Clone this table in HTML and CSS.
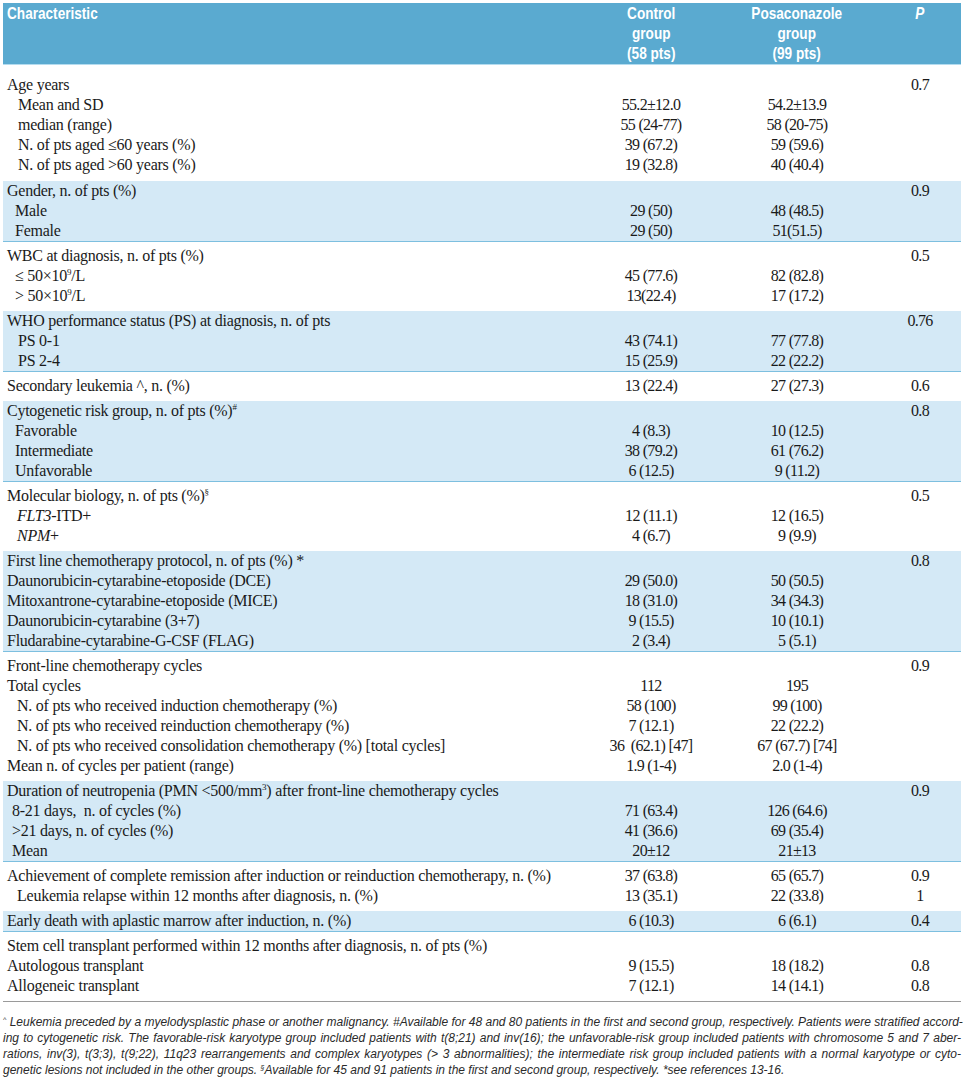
FILE: index.html
```html
<!DOCTYPE html>
<html lang="en">
<head>
<meta charset="utf-8">
<title>Patient characteristics</title>
<link rel="stylesheet" href="styles.css">
</head>
<body>
<div class="page">
  <div class="thead">
    <div class="h-label"><span class="hx left">Characteristic</span></div>
    <div class="h-num"><span class="hx">Control<br>group<br>(58 pts)</span></div>
    <div class="h-num"><span class="hx">Posaconazole<br>group<br>(99 pts)</span></div>
    <div class="h-p"><span class="hx"><i>P</i></span></div>
  </div>

  <div class="group first">
    <div class="row"><div class="lab">Age years</div><div class="v"></div><div class="v"></div><div class="p">0.7</div></div>
    <div class="row"><div class="lab in11">Mean and SD</div><div class="v">55.2±12.0</div><div class="v">54.2±13.9</div><div class="p"></div></div>
    <div class="row"><div class="lab in11">median (range)</div><div class="v">55 (24-77)</div><div class="v">58 (20-75)</div><div class="p"></div></div>
    <div class="row"><div class="lab in11">N. of pts aged ≤60 years (%)</div><div class="v">39 (67.2)</div><div class="v">59 (59.6)</div><div class="p"></div></div>
    <div class="row"><div class="lab in11">N. of pts aged &gt;60 years (%)</div><div class="v">19 (32.8)</div><div class="v">40 (40.4)</div><div class="p"></div></div>
  </div>

  <div class="group band">
    <div class="row"><div class="lab">Gender, n. of pts (%)</div><div class="v"></div><div class="v"></div><div class="p">0.9</div></div>
    <div class="row"><div class="lab in8">Male</div><div class="v">29 (50)</div><div class="v">48 (48.5)</div><div class="p"></div></div>
    <div class="row"><div class="lab in8">Female</div><div class="v">29 (50)</div><div class="v">51(51.5)</div><div class="p"></div></div>
  </div>

  <div class="group">
    <div class="row"><div class="lab">WBC at diagnosis, n. of pts (%)</div><div class="v"></div><div class="v"></div><div class="p">0.5</div></div>
    <div class="row"><div class="lab in8">≤ 50×10<sup>9</sup>/L</div><div class="v">45 (77.6)</div><div class="v">82 (82.8)</div><div class="p"></div></div>
    <div class="row"><div class="lab in8">&gt; 50×10<sup>9</sup>/L</div><div class="v">13(22.4)</div><div class="v">17 (17.2)</div><div class="p"></div></div>
  </div>

  <div class="group band">
    <div class="row"><div class="lab">WHO performance status (PS) at diagnosis, n. of pts</div><div class="v"></div><div class="v"></div><div class="p">0.76</div></div>
    <div class="row"><div class="lab in11">PS 0-1</div><div class="v">43 (74.1)</div><div class="v">77 (77.8)</div><div class="p"></div></div>
    <div class="row"><div class="lab in11">PS 2-4</div><div class="v">15 (25.9)</div><div class="v">22 (22.2)</div><div class="p"></div></div>
  </div>

  <div class="group">
    <div class="row"><div class="lab">Secondary leukemia ^, n. (%)</div><div class="v">13 (22.4)</div><div class="v">27 (27.3)</div><div class="p">0.6</div></div>
  </div>

  <div class="group band">
    <div class="row"><div class="lab">Cytogenetic risk group, n. of pts (%)<sup>#</sup></div><div class="v"></div><div class="v"></div><div class="p">0.8</div></div>
    <div class="row"><div class="lab in8">Favorable</div><div class="v">4 (8.3)</div><div class="v">10 (12.5)</div><div class="p"></div></div>
    <div class="row"><div class="lab in8">Intermediate</div><div class="v">38 (79.2)</div><div class="v">61 (76.2)</div><div class="p"></div></div>
    <div class="row"><div class="lab in8">Unfavorable</div><div class="v">6 (12.5)</div><div class="v">9 (11.2)</div><div class="p"></div></div>
  </div>

  <div class="group">
    <div class="row"><div class="lab">Molecular biology, n. of pts (%)<sup>§</sup></div><div class="v"></div><div class="v"></div><div class="p">0.5</div></div>
    <div class="row"><div class="lab in10"><i>FLT3</i>-ITD+</div><div class="v">12 (11.1)</div><div class="v">12 (16.5)</div><div class="p"></div></div>
    <div class="row"><div class="lab in10"><i>NPM</i>+</div><div class="v">4 (6.7)</div><div class="v">9 (9.9)</div><div class="p"></div></div>
  </div>

  <div class="group band">
    <div class="row"><div class="lab">First line chemotherapy protocol, n. of pts (%) *</div><div class="v"></div><div class="v"></div><div class="p">0.8</div></div>
    <div class="row"><div class="lab">Daunorubicin-cytarabine-etoposide (DCE)</div><div class="v">29 (50.0)</div><div class="v">50 (50.5)</div><div class="p"></div></div>
    <div class="row"><div class="lab">Mitoxantrone-cytarabine-etoposide (MICE)</div><div class="v">18 (31.0)</div><div class="v">34 (34.3)</div><div class="p"></div></div>
    <div class="row"><div class="lab">Daunorubicin-cytarabine (3+7)</div><div class="v">9 (15.5)</div><div class="v">10 (10.1)</div><div class="p"></div></div>
    <div class="row"><div class="lab">Fludarabine-cytarabine-G-CSF (FLAG)</div><div class="v">2 (3.4)</div><div class="v">5 (5.1)</div><div class="p"></div></div>
  </div>

  <div class="group">
    <div class="row"><div class="lab">Front-line chemotherapy cycles</div><div class="v"></div><div class="v"></div><div class="p">0.9</div></div>
    <div class="row"><div class="lab">Total cycles</div><div class="v">112</div><div class="v">195</div><div class="p"></div></div>
    <div class="row"><div class="lab in10">N. of pts who received induction chemotherapy (%)</div><div class="v">58 (100)</div><div class="v">99 (100)</div><div class="p"></div></div>
    <div class="row"><div class="lab in10">N. of pts who received reinduction chemotherapy (%)</div><div class="v">7 (12.1)</div><div class="v">22 (22.2)</div><div class="p"></div></div>
    <div class="row"><div class="lab in10">N. of pts who received consolidation chemotherapy (%) [total cycles]</div><div class="v">36&nbsp; (62.1) [47]</div><div class="v">67 (67.7) [74]</div><div class="p"></div></div>
    <div class="row"><div class="lab">Mean n. of cycles per patient (range)</div><div class="v">1.9 (1-4)</div><div class="v">2.0 (1-4)</div><div class="p"></div></div>
  </div>

  <div class="group band">
    <div class="row"><div class="lab">Duration of neutropenia (PMN &lt;500/mm<sup>3</sup>) after front-line chemotherapy cycles</div><div class="v"></div><div class="v"></div><div class="p">0.9</div></div>
    <div class="row"><div class="lab in5">8-21 days,&nbsp; n. of cycles (%)</div><div class="v">71 (63.4)</div><div class="v">126 (64.6)</div><div class="p"></div></div>
    <div class="row"><div class="lab in5">&gt;21 days, n. of cycles (%)</div><div class="v">41 (36.6)</div><div class="v">69 (35.4)</div><div class="p"></div></div>
    <div class="row"><div class="lab in5">Mean</div><div class="v">20±12</div><div class="v">21±13</div><div class="p"></div></div>
  </div>

  <div class="group">
    <div class="row"><div class="lab">Achievement of complete remission after induction or reinduction chemotherapy, n. (%)</div><div class="v">37 (63.8)</div><div class="v">65 (65.7)</div><div class="p">0.9</div></div>
    <div class="row"><div class="lab in10">Leukemia relapse within 12 months after diagnosis, n. (%)</div><div class="v">13 (35.1)</div><div class="v">22 (33.8)</div><div class="p">1</div></div>
  </div>

  <div class="group band">
    <div class="row"><div class="lab">Early death with aplastic marrow after induction, n. (%)</div><div class="v">6 (10.3)</div><div class="v">6 (6.1)</div><div class="p">0.4</div></div>
  </div>

  <div class="group last">
    <div class="row"><div class="lab">Stem cell transplant performed within 12 months after diagnosis, n. of pts (%)</div><div class="v"></div><div class="v"></div><div class="p"></div></div>
    <div class="row"><div class="lab">Autologous transplant</div><div class="v">9 (15.5)</div><div class="v">18 (18.2)</div><div class="p">0.8</div></div>
    <div class="row"><div class="lab">Allogeneic transplant</div><div class="v">7 (12.1)</div><div class="v">14 (14.1)</div><div class="p">0.8</div></div>
  </div>

  <div class="notes">
    <div class="nl"><sup>^</sup> Leukemia preceded by a myelodysplastic phase or another malignancy. #Available for 48 and 80 patients in the first and second group, respectively. Patients were stratified accord-</div>
    <div class="nl">ing to cytogenetic risk. The favorable-risk karyotype group included patients with t(8;21) and inv(16); the unfavorable-risk group included patients with chromosome 5 and 7 aber-</div>
    <div class="nl">rations, inv(3), t(3;3), t(9;22), 11q23 rearrangements and complex karyotypes (&gt; 3 abnormalities); the intermediate risk group included patients with a normal karyotype or cyto-</div>
    <div class="nl end">genetic lesions not included in the other groups. <sup>§</sup>Available for 45 and 91 patients in the first and second group, respectively. *see references 13-16.</div>
  </div>
</div>
</body>
</html>
```

FILE: styles.css
```css
html, body {
  margin: 0;
  padding: 0;
  background: #ffffff;
}

.page {
  width: 958px;
  padding: 3px 3px 0 3px;
  font-family: "Liberation Serif", "Times New Roman", serif;
  font-size: 16px;
  color: #1a1a1a;
}

/* header */
.thead {
  display: grid;
  grid-template-columns: 1fr 146px 146px 91px;
  background: #5aaad0;
  color: #ffffff;
  font-family: "Liberation Sans", Arial, sans-serif;
  font-weight: bold;
  font-size: 17px;
  line-height: 20px;
  padding-top: 1px;
  border-bottom: 1px solid #b4dcef;
}

.hx {
  display: inline-block;
  transform: scaleX(0.8);
  transform-origin: center top;
}

.hx.left {
  transform-origin: left top;
}

.h-label {
  padding-left: 4px;
}

.h-num {
  text-align: center;
}

.h-p {
  text-align: center;
  padding-left: 9px;
}

/* body groups */
.group {
  padding: 4px 0 5px 0;
}

.group.first {
  padding: 10px 0 6px 0;
}

.group.band {
  background: #d4e9f6;
  padding: 0;
  border-bottom: 1px solid #7dbfdf;
}

.group.last {
  border-bottom: 1px solid #9a9a9a;
}

.row {
  display: grid;
  grid-template-columns: 1fr 146px 146px 91px;
  height: 20px;
  line-height: 20px;
  white-space: nowrap;
}

.lab {
  padding-left: 4px;
  letter-spacing: -0.25px;
}

.lab.in5 { padding-left: 9px; }
.lab.in8 { padding-left: 12px; }
.lab.in10 { padding-left: 14px; }
.lab.in11 { padding-left: 15px; }

.v {
  text-align: center;
  letter-spacing: -0.7px;
}

.p {
  text-align: center;
  padding-left: 9px;
  letter-spacing: -0.7px;
}

sup {
  font-size: 9px;
  line-height: 0;
  vertical-align: 6px;
}

/* footnotes */
.notes {
  padding-top: 12px;
  font-family: "Liberation Sans", Arial, sans-serif;
  font-style: italic;
  font-size: 12px;
  line-height: 16px;
  color: #2a2a2a;
}

.nl {
  text-align: justify;
  text-align-last: justify;
  white-space: nowrap;
}

.nl.end {
  text-align-last: left;
}

.notes sup {
  font-size: 7px;
  vertical-align: 4px;
}
```
